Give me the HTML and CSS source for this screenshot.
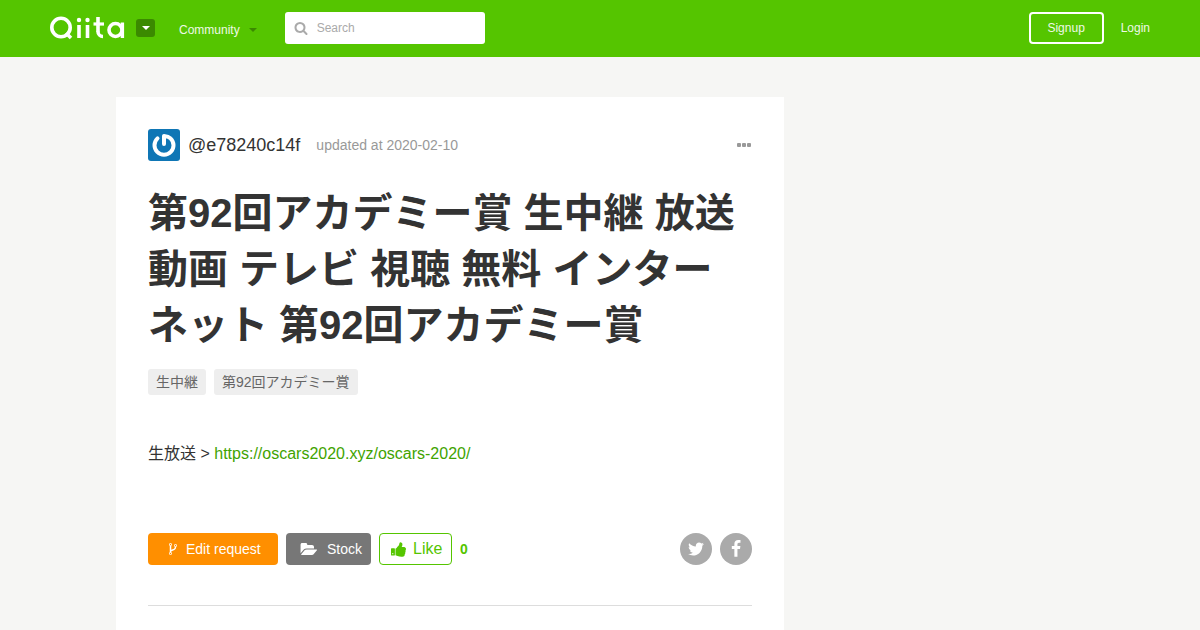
FILE: index.html
```html
<!DOCTYPE html>
<html lang="ja">
<head>
    <meta charset="UTF-8">
    <meta name="viewport" content="width=device-width, initial-scale=1.0">
    <title>第92回アカデミー賞 生中継 放送 動画 - Qiita</title>
    <link rel="stylesheet" href="styles.css">
</head>
<body>
    <header class="header">
        <div class="header-inner">
            <a class="logo" href="#" aria-label="Qiita">
                <svg width="75" height="24" viewBox="0 0 75 24" fill="none" stroke="#fff" stroke-width="3.6">
                    <circle cx="11" cy="11.5" r="9.2"/>
                    <line x1="16" y1="17" x2="21" y2="22"/>
                    <line x1="29" y1="9" x2="29" y2="22"/>
                    <line x1="37.5" y1="9" x2="37.5" y2="22"/>
                    <circle cx="29" cy="4" r="2.2" fill="#fff" stroke="none"/>
                    <circle cx="37.5" cy="4" r="2.2" fill="#fff" stroke="none"/>
                    <line x1="48" y1="1" x2="48" y2="16"/>
                    <line x1="43.5" y1="8" x2="54" y2="8" stroke-width="3.2"/>
                    <circle cx="53" cy="15.5" r="5" pathLength="4" stroke-dasharray="1 3" stroke-dashoffset="-1"/>
                    <circle cx="65.5" cy="14" r="6.5"/>
                    <line x1="72.4" y1="6.5" x2="72.4" y2="22" stroke-width="3.4"/>
                </svg>
            </a>
            <button class="logo-menu" type="button" aria-label="Menu"><span class="caret"></span></button>
            <a class="community" href="#">Community <span class="caret caret-dark"></span></a>
            <form class="search">
                <svg class="search-icon" viewBox="0 0 1792 1792"><path d="M1216 832q0-185-131.5-316.5t-316.5-131.5-316.5 131.5-131.5 316.5 131.5 316.5 316.5 131.5 316.5-131.5 131.5-316.5zm512 832q0 52-38 90t-90 38q-54 0-90-38l-343-342q-179 124-399 124-143 0-273.5-55.5t-225-150-150-225-55.5-273.5 55.5-273.5 150-225 225-150 273.5-55.5 273.5 55.5 225 150 150 225 55.5 273.5q0 220-124 399l343 343q37 37 37 90z"/></svg>
                <input class="search-input" type="search" placeholder="Search" aria-label="Search">
            </form>
            <nav class="account">
                <a class="signup" href="#">Signup</a>
                <a class="login" href="#">Login</a>
            </nav>
        </div>
    </header>

    <div class="container">
        <main class="article">
            <div class="author">
                <svg class="avatar" viewBox="0 0 32 32">
                    <rect width="32" height="32" rx="3" fill="#0f76b5"/>
                    <path d="M9.5 9.4a9.5 9.5 0 1 0 13 0q-2-2-6.5-2.4V15" fill="none" stroke="#fff" stroke-width="4" stroke-linecap="round" stroke-linejoin="round"/>
                </svg>
                <a class="author-name" href="#">@e78240c14f</a>
                <span class="updated">updated at 2020-02-10</span>
                <button class="more" type="button" aria-label="More">
                    <svg width="14" height="4" viewBox="0 0 14 4"><rect width="4" height="4" rx="1"/><rect x="5" width="4" height="4" rx="1"/><rect x="10" width="4" height="4" rx="1"/></svg>
                </button>
            </div>

            <h1 class="title">第92回アカデミー賞 生中継 放送 動画 テレビ 視聴 無料 インターネット 第92回アカデミー賞</h1>

            <div class="tags">
                <a class="tag" href="#">生中継</a>
                <a class="tag" href="#">第92回アカデミー賞</a>
            </div>

            <p class="body-text">生放送 &gt; <a href="#">https://oscars2020.xyz/oscars-2020/</a></p>

            <div class="actions">
                <button class="btn btn-edit" type="button">
                    <svg class="icon-fork" viewBox="384 128 1024 1536"><path d="M672 1472q0-40-28-68t-68-28-68 28-28 68 28 68 68 28 68-28 28-68zm0-1152q0-40-28-68t-68-28-68 28-28 68 28 68 68 28 68-28 28-68zm640 128q0-40-28-68t-68-28-68 28-28 68 28 68 68 28 68-28 28-68zm96 0q0 52-26 96.5t-70 69.5q-2 287-226 414-67 38-203 81-128 40-169.5 71t-41.5 100v26q44 25 70 69.5t26 96.5q0 80-56 136t-136 56-136-56-56-136q0-52 26-96.5t70-69.5v-820q-44-25-70-69.5t-26-96.5q0-80 56-136t136-56 136 56 56 136q0 52-26 96.5t-70 69.5v497q54-26 154-57 55-17 87.5-29.5t70.5-31 59-39.5 40.5-51 28-69.5 8.5-91.5q-44-25-70-69.5t-26-96.5q0-80 56-136t136-56 136 56 56 136z"/></svg>
                    Edit request
                </button>
                <button class="btn btn-stock" type="button">
                    <svg class="icon-folder" viewBox="0 256 1943 1280"><path d="M1943 952q0 31-31 66l-336 396q-43 51-120.5 86.5t-143.5 35.5h-1088q-34 0-60.5-13t-26.5-43q0-31 31-66l336-396q43-51 120.5-86.5t143.5-35.5h1088q34 0 60.5 13t26.5 43zm-343-344v160h-832q-94 0-197 47.5t-164 119.5l-337 396-5 6q0-4-.5-12.5t-.5-12.5v-960q0-92 66-158t158-66h320q92 0 158 66t66 158v32h544q92 0 158 66t66 158z"/></svg>
                    Stock
                </button>
                <button class="btn btn-like" type="button">
                    <svg class="icon-thumb" viewBox="64 128 1600 1536"><path d="M320 1344q0-26-19-45t-45-19q-27 0-45.5 19t-18.5 45q0 27 18.5 45.5t45.5 18.5q26 0 45-18.5t19-45.5zm160-512v640q0 26-19 45t-45 19h-288q-26 0-45-19t-19-45v-640q0-26 19-45t45-19h288q26 0 45 19t19 45zm1184 0q0 86-55 149 15 44 15 76 3 76-43 137 17 56 0 117-15 57-54 94 9 112-49 181-64 76-197 78h-129q-66 0-144-15.5t-121.5-29-120.5-39.5q-123-43-158-44-26-1-45-19.5t-19-44.5v-641q0-25 18-43.5t43-20.5q24-2 76-59t101-121q68-87 101-120 18-18 31-48t17.5-48.5 13.5-60.5q7-39 12.5-61t19.5-52 34-50q19-19 45-19 46 0 82.5 10.5t60 26 40 40.5 24 45 12 50 5 45 .5 39q0 38-9.5 76t-19 60-27.5 56q-3 6-10 18t-11 22-8 24h277q78 0 135 57t57 135z"/></svg>
                    Like
                </button>
                <span class="like-count">0</span>
                <div class="share">
                    <a class="share-link" href="#" aria-label="Twitter"><svg viewBox="0 0 1792 1792"><path d="M1684 408q-67 98-162 167 1 14 1 42 0 130-38 259.5t-115.5 248.5-184.5 210.5-258 146-323 54.5q-271 0-496-145 35 4 78 4 225 0 401-138-105-2-188-64.5t-114-159.5q33 5 61 5 43 0 85-11-112-23-185.5-111.5t-73.5-205.5v-4q68 38 146 41-66-44-105-115t-39-154q0-88 44-163 121 149 294.5 238.5t371.5 99.5q-8-38-8-74 0-134 94.5-228.5t228.5-94.5q140 0 236 102 109-21 205-78-37 115-142 178 93-10 186-50z"/></svg></a>
                    <a class="share-link" href="#" aria-label="Facebook"><svg viewBox="0 0 1792 1792"><path d="M1343 12v264h-157q-86 0-116 36t-30 108v189h293l-39 296h-254v759h-306v-759h-255v-296h255v-218q0-186 104-288.5t277-102.5q147 0 228 12z"/></svg></a>
                </div>
            </div>

            <hr class="divider">
        </main>
    </div>
</body>
</html>
```
FILE: styles.css
```css
* {
    box-sizing: border-box;
}

body {
    margin: 0;
    font-family: "Liberation Sans", Arial, "Noto Sans CJK JP", sans-serif;
    color: #333;
    background-color: #f6f6f4;
}

a {
    color: inherit;
    text-decoration: none;
}

button {
    font-family: inherit;
    border: none;
    cursor: pointer;
}

svg {
    display: block;
    fill: currentColor;
}

/* Header */
.header {
    background-color: #55c500;
    color: #fff;
    font-size: 12px;
}

.header-inner {
    display: flex;
    align-items: center;
    max-width: 1132px;
    height: 57px;
    margin: 0 auto;
    padding: 0 16px 1px;
}

.logo svg {
    fill: none;
}

.logo-menu {
    display: flex;
    align-items: center;
    justify-content: center;
    width: 19px;
    height: 18px;
    margin-left: 11px;
    padding: 0;
    border-radius: 3px;
    background-color: #3b8a00;
}

.caret {
    border-top: 4px solid #fff;
    border-left: 4px solid transparent;
    border-right: 4px solid transparent;
}

.caret-dark {
    border-top-color: #3b8a00;
}

.community {
    display: flex;
    align-items: center;
    gap: 9px;
    margin-left: 24px;
    padding-top: 4px;
    color: #eef9e6;
}

.search {
    display: flex;
    align-items: center;
    width: 200px;
    height: 32px;
    margin-left: 28px;
    padding: 0 9px;
    gap: 9px;
    border-radius: 3px;
    background-color: #fff;
}

.search-icon {
    flex: none;
    width: 14px;
    height: 14px;
    color: #aaa;
}

.search-input {
    flex: 1;
    min-width: 0;
    padding: 0;
    border: none;
    outline: none;
    font-family: inherit;
    font-size: 12px;
    background: none;
}

.search-input::placeholder {
    color: #aaa;
}

.account {
    display: flex;
    align-items: center;
    gap: 17px;
    margin-left: auto;
    color: #eef9e6;
}

.signup {
    min-width: 75px;
    padding: 0 16px;
    border: 2px solid #fff;
    border-radius: 4px;
    line-height: 28px;
    text-align: center;
}

/* Article */
.container {
    max-width: 968px;
    margin: 40px auto 0;
}

.article {
    max-width: 668px;
    padding: 32px 32px 24px;
    background-color: #fff;
}

.author {
    display: flex;
    align-items: center;
}

.avatar {
    width: 32px;
    height: 32px;
    margin-right: 8px;
}

.author-name {
    font-size: 18px;
}

.updated {
    margin-left: 16px;
    font-size: 14px;
    color: #999;
}

.more {
    margin-left: auto;
    padding: 8px 1px;
    background: none;
    color: #999;
}

.title {
    margin: 24px 0 16px;
    font-size: 40px;
    line-height: 56px;
}

.tags {
    display: flex;
    flex-wrap: wrap;
    gap: 8px;
}

.tag {
    padding: 0 8px;
    border-radius: 3px;
    background-color: #eee;
    color: #666;
    font-size: 14px;
    line-height: 26px;
}

.body-text {
    margin: 44px 0 64px;
    font-size: 16px;
    line-height: 30px;
}

.body-text a {
    color: #41a300;
}

/* Buttons below the article */
.actions {
    display: flex;
    align-items: center;
    gap: 8px;
}

.btn {
    display: flex;
    align-items: center;
    height: 32px;
    border-radius: 4px;
    color: #fff;
    font-size: 14px;
}

.btn-edit {
    min-width: 130px;
    gap: 9px;
    padding: 0 16px 0 21px;
    background-color: #ff8f00;
}

.btn-stock {
    min-width: 85px;
    gap: 10px;
    padding: 0 8px 0 14px;
    background-color: #777;
}

.btn-like {
    min-width: 73px;
    gap: 7px;
    padding: 0 8px 0 11px;
    border: 1px solid #55c500;
    background-color: #fff;
    color: #55c500;
    font-size: 16px;
}

.icon-fork {
    width: 8px;
    height: 12px;
}

.icon-folder {
    width: 17px;
    height: 13px;
}

.icon-thumb {
    width: 15px;
    height: 15px;
}

.like-count {
    color: #55c500;
    font-size: 14px;
    font-weight: bold;
}

.share {
    display: flex;
    gap: 8px;
    margin-left: auto;
}

.share-link {
    display: flex;
    align-items: center;
    justify-content: center;
    width: 32px;
    height: 32px;
    border-radius: 50%;
    background-color: #aaa;
    color: #fff;
}

.share-link svg {
    width: 18px;
    height: 18px;
}

.divider {
    margin: 40px 0 0;
    border: none;
    border-top: 1px solid #ddd;
}
```
